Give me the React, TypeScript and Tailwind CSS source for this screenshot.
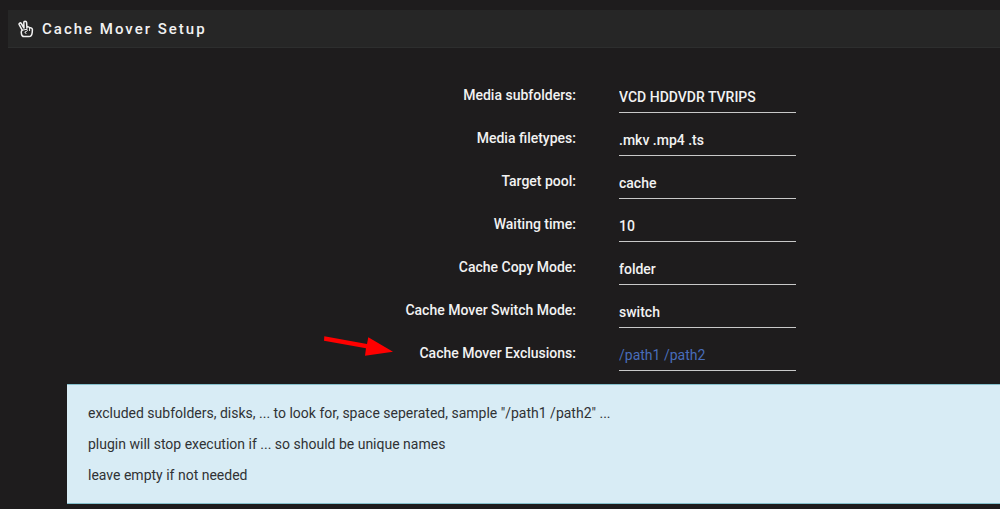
import { useState } from 'react'

type Field = {
  id: string
  label: string
  value: string
  placeholder?: string
  marked?: boolean
}

const FIELDS: Field[] = [
  { id: 'subfolders', label: 'Media subfolders:', value: 'VCD HDDVDR TVRIPS' },
  { id: 'filetypes', label: 'Media filetypes:', value: '.mkv .mp4 .ts' },
  { id: 'pool', label: 'Target pool:', value: 'cache' },
  { id: 'waiting', label: 'Waiting time:', value: '10' },
  { id: 'copy-mode', label: 'Cache Copy Mode:', value: 'folder' },
  { id: 'switch-mode', label: 'Cache Mover Switch Mode:', value: 'switch' },
  {
    id: 'exclusions',
    label: 'Cache Mover Exclusions:',
    value: '',
    placeholder: '/path1 /path2',
    marked: true,
  },
]

const HELP = [
  'excluded subfolders, disks, ... to look for, space seperated, sample "/path1 /path2" ...',
  'plugin will stop execution if ... so should be unique names',
  'leave empty if not needed',
]

export default function App() {
  return (
    <div className="min-h-screen bg-[#1e1c1d] pt-[10px] font-['Roboto',sans-serif] text-sm text-[#f2f2f2]">
      <TitleBar />
      <form className="mt-[33px]">
        {FIELDS.map((field) => (
          <FieldRow key={field.id} field={field} />
        ))}
      </form>
      <HelpBox />
    </div>
  )
}

function TitleBar() {
  return (
    <header className="ml-2 flex h-[38px] items-center gap-2 border-b border-[#2d2e2e] bg-[#262626] pl-[10px]">
      <PeaceIcon />
      <h1 className="text-[15px] leading-6 font-medium tracking-[2px]">Cache Mover Setup</h1>
    </header>
  )
}

function PeaceIcon() {
  return (
    <svg
      viewBox="0 0 16 18"
      aria-hidden="true"
      className="h-[18px] w-4 fill-none stroke-current"
      strokeWidth="1.5"
      strokeLinecap="round"
      strokeLinejoin="round"
    >
      <path d="M4.200 10.200 L1.200 4.600 C0.600 3.200 2.400 2.200 3.300 3.500 L6 8 L5.800 2.600 C5.800 0.900 8.400 0.900 8.600 2.600 L8.900 7.200 C9.800 6.500 11.200 6.800 11.600 7.800 C13 7.400 14.500 8.200 14.400 9.800 L14.200 12.600 C13.900 15 12.800 16.600 11 16.600 H6.200 C4.300 16.600 3.400 14.600 3.300 12.600 C3.200 11.400 3.300 10.600 4.200 10.200 Z" />
      <path strokeWidth="1" d="M4.400 10.200 L8.200 9.400 C9.600 9.400 9.700 11.200 8.400 11.500 L6.800 12 L8 13.600 M8.900 7.400 V9.400 M11.600 8 V10.600" />
    </svg>
  )
}

function FieldRow({ field }: { field: Field }) {
  const [value, setValue] = useState(field.value)

  return (
    <div className="grid h-[43px] grid-cols-[58%_1fr]">
      <div className="flex items-start justify-end pt-1 pr-1">
        <label htmlFor={field.id} className="relative leading-5 font-medium">
          {field.marked && <Arrow />}
          {field.label}
        </label>
      </div>
      <div className="pl-[39px]">
        <input
          id={field.id}
          type="text"
          value={value}
          placeholder={field.placeholder}
          onChange={(e) => setValue(e.target.value)}
          className="h-8 w-[177px] border-b border-[#c8c8c8] bg-transparent font-medium outline-none placeholder:font-normal placeholder:text-[#486dba]"
        />
      </div>
    </div>
  )
}

function Arrow() {
  return (
    <svg
      viewBox="0 0 70 22"
      aria-hidden="true"
      className="absolute -top-2 right-full mr-[26px] h-[22px] w-[70px] max-w-none fill-[#ff0000]"
    >
      <path d="M1.300 1.300 L44 9 L45.300 2.300 L70 16.700 L42 20.700 L43 13.300 L1 5.700 Z" />
    </svg>
  )
}

function HelpBox() {
  return (
    <div className="mt-[2px] ml-[67px] flex flex-col gap-[11px] border-y border-[#85c0cc] bg-[#d8ecf5] px-[21px] py-[18px] leading-5 text-[#303234]">
      {HELP.map((line) => (
        <p key={line}>{line}</p>
      ))}
    </div>
  )
}
